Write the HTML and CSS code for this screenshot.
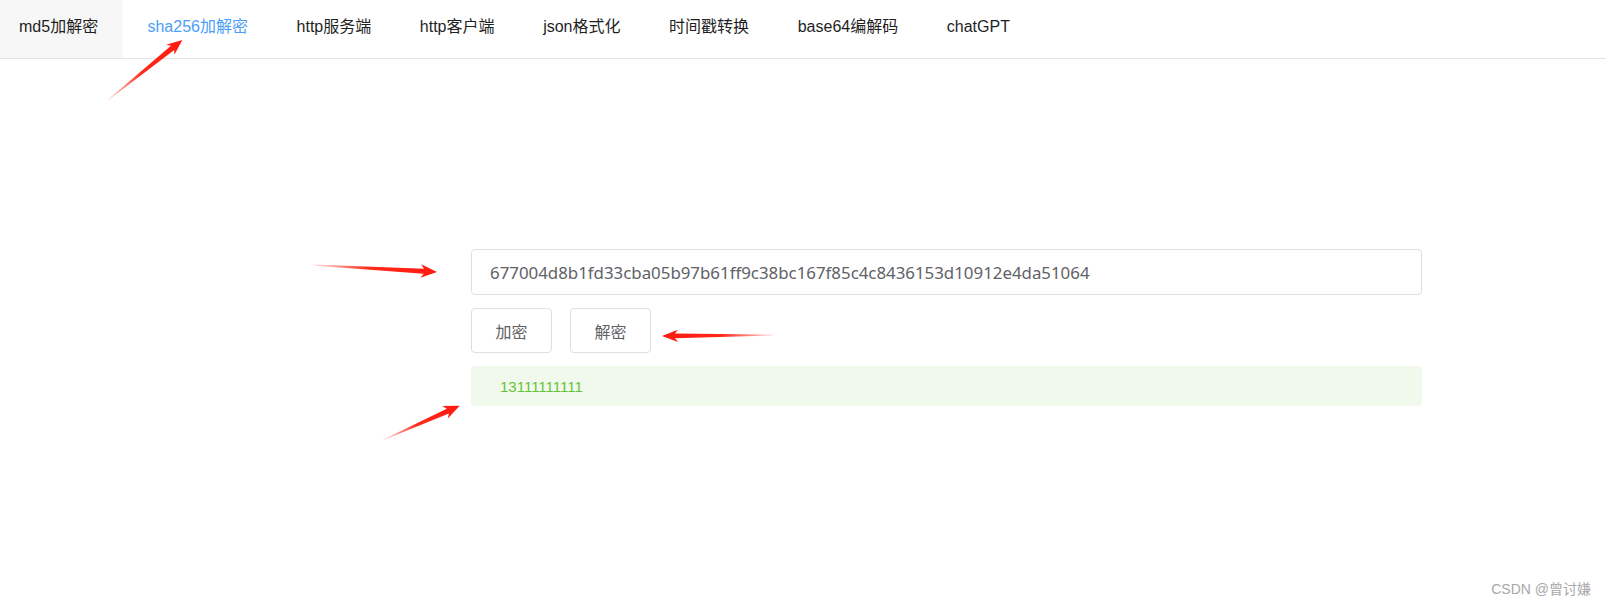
FILE: index.html
```html
<!DOCTYPE html>
<html lang="zh-CN">
<head>
<meta charset="utf-8">
<title>工具</title>
<link rel="stylesheet" href="styles.css">
</head>
<body>
<nav class="menu">
  <ul class="menu-list">
    <li class="menu-item is-hover">md5加解密</li>
    <li class="menu-item is-active">sha256加解密</li>
    <li class="menu-item">http服务端</li>
    <li class="menu-item">http客户端</li>
    <li class="menu-item">json格式化</li>
    <li class="menu-item">时间戳转换</li>
    <li class="menu-item">base64编解码</li>
    <li class="menu-item">chatGPT</li>
  </ul>
</nav>
<main class="main">
  <div class="panel">
    <div class="input-wrap">
      <input class="input" type="text" value="677004d8b1fd33cba05b97b61ff9c38bc167f85c4c8436153d10912e4da51064">
    </div>
    <div class="actions">
      <button class="btn" type="button">加密</button>
      <button class="btn" type="button">解密</button>
    </div>
    <div class="alert">13111111111</div>
  </div>
</main>
<div class="watermark">CSDN @曾讨嫌</div>
<svg class="annotations" width="1606" height="607" viewBox="0 0 1606 607" xmlns="http://www.w3.org/2000/svg">
  <defs>
    <linearGradient id="fade" x1="0" y1="0" x2="1" y2="0">
      <stop offset="0" stop-color="#ff2a1a" stop-opacity="0.15"/>
      <stop offset="0.45" stop-color="#ff2a1a" stop-opacity="1"/>
      <stop offset="1" stop-color="#ff1a10" stop-opacity="1"/>
    </linearGradient>
  </defs>
  <g transform="translate(108,100) rotate(-38.9)">
    <polygon fill="url(#fade)" points="0,-0.3 83,-2.6 80,-6.5 95.6,0 80,6.5 83,2.6 0,0.3"/>
  </g>
  <g transform="translate(313,265) rotate(3.23)">
    <polygon fill="url(#fade)" points="0,-0.4 111,-2.6 108,-6.8 124.2,0 108,6.8 111,2.6 0,0.4"/>
  </g>
  <g transform="translate(773,335) rotate(179.5)">
    <polygon fill="url(#fade)" points="0,-0.4 98,-2.4 95,-6.2 111,0 95,6.2 98,2.4 0,0.4"/>
  </g>
  <g transform="translate(383,440) rotate(-24.1)">
    <polygon fill="url(#fade)" points="0,-0.3 71,-2.6 68,-6.8 84,0 68,6.8 71,2.6 0,0.3"/>
  </g>
</svg>
</body>
</html>
```
FILE: styles.css
```css
html, body {
  margin: 0;
  padding: 0;
  background: #ffffff;
}
body {
  width: 1606px;
  height: 607px;
  position: relative;
  overflow: hidden;
  font-family: "Liberation Sans", "Noto Sans CJK SC", sans-serif;
}
.menu {
  border-bottom: 1px solid #e4e4e4;
}
.menu-list {
  list-style: none;
  margin: 0;
  padding: 0;
  display: flex;
  height: 58px;
}
.menu-item {
  height: 58px;
  line-height: 54px;
  padding: 0 24.3px;
  font-size: 16px;
  color: #1f1f1f;
  white-space: nowrap;
}
.menu-item:first-child {
  padding-left: 19px;
  padding-right: 25px;
}
.menu-item.is-hover {
  background: #f7f7f7;
}
.menu-item.is-active {
  color: #4c9ef7;
}
.main {
  padding: 190px 0 0 471px;
}
.panel {
  width: 951px;
  display: flex;
  flex-direction: column;
}
.input-wrap {
  display: flex;
}
.input {
  flex: 1;
  height: 46px;
  box-sizing: border-box;
  border: 1px solid #dcdfe6;
  border-radius: 4px;
  padding: 0 18px;
  font-family: "Noto Sans", "Noto Sans CJK SC", sans-serif;
  font-size: 16.85px;
  color: #606266;
  outline: none;
  background: #fff;
}
.actions {
  display: flex;
  gap: 18px;
  margin-top: 13px;
}
.btn {
  width: 81px;
  height: 45px;
  box-sizing: border-box;
  border: 1px solid #dcdfe6;
  border-radius: 4px;
  background: #fff;
  color: #606266;
  font-family: "Noto Sans CJK SC", sans-serif;
  font-size: 16px;
  padding: 0;
}
.alert {
  margin-top: 13px;
  height: 40px;
  box-sizing: border-box;
  background: #f0f9eb;
  border-radius: 4px;
  padding: 0 29px;
  display: flex;
  align-items: center;
  color: #67c23a;
  font-family: "Liberation Sans", sans-serif;
  font-size: 15px;
}
.watermark {
  position: absolute;
  right: 15px;
  bottom: 9px;
  font-size: 14px;
  color: #a8a8a8;
  font-family: "Liberation Sans", "Noto Sans CJK SC", sans-serif;
}
.annotations {
  position: absolute;
  left: 0;
  top: 0;
  pointer-events: none;
}
```
